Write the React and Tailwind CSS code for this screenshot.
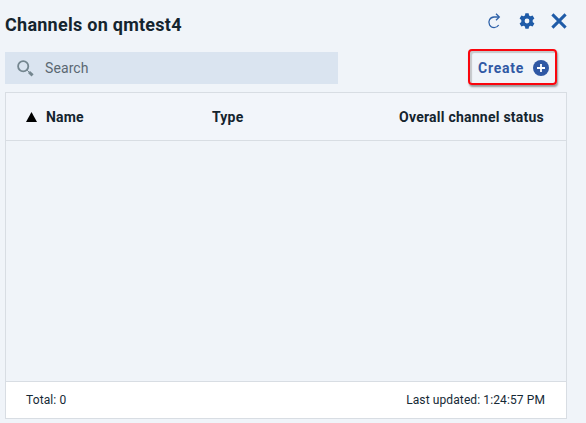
function RefreshIcon() {
  return (
    <svg className="block h-[18px] w-[14px]" viewBox="0 0 14 18" fill="none" stroke="#2d60a8" strokeWidth="1.3">
      <path d="M12 5H7a5.3 5.3 0 1 0 4.7 8" />
      <path d="M9 1.8L12.3 5 9 8.2" />
    </svg>
  );
}

function GearIcon() {
  return (
    <svg className="block h-4 w-4" viewBox="0 0 16 16" fill="#1f5ba8">
      <path
        fillRule="evenodd"
        d="M6.4.3h3.2l.5 2.2 1.3.8 2.2-.8 1.8 3-1.7 1.5v2l1.7 1.5-1.8 3-2.2-.8-1.3.8-.5 2.2H6.4l-.5-2.2-1.3-.8-2.2.8-1.8-3L2.3 9V7L.6 5.5l1.8-3 2.2.8 1.3-.8zM8 5.6a2.4 2.4 0 1 0 0 4.8 2.4 2.4 0 0 0 0-4.8z"
      />
    </svg>
  );
}

function CloseIcon() {
  return (
    <svg className="block h-4 w-4" viewBox="0 0 16 16" stroke="#1f5ba8" strokeWidth="3">
      <path d="M1.4 1.4l13.2 13.2M14.6 1.4L1.4 14.6" />
    </svg>
  );
}

function SearchIcon() {
  return (
    <svg className="block h-[17px] w-[17px]" viewBox="0 0 17 17" fill="none" stroke="#74868f">
      <circle cx="6.2" cy="6.2" r="5.1" strokeWidth="1.8" />
      <path d="M10.2 10.2l1.8 1.8" strokeWidth="1" />
      <path d="M12 12l3.6 3.4" strokeWidth="3" />
    </svg>
  );
}

function PlusIcon() {
  return (
    <svg className="block h-4 w-4" viewBox="0 0 16 16">
      <circle cx="8" cy="8" r="8" fill="#2f58a4" />
      <path d="M8 4v8M4 8h8" stroke="#fff" strokeWidth="1.8" />
    </svg>
  );
}

export default function App() {
  return (
    <main className="flex h-[423px] w-[586px] flex-col overflow-hidden bg-[#f0f4f9] pl-[5px] font-['Roboto','Liberation_Sans',sans-serif] text-[#152935]">
      <header className="flex h-[52px] shrink-0 items-start justify-between pr-[19px]">
        <h1 className="mt-[13px] text-[18px] leading-6 font-bold tracking-[0.26px] text-[#14242e]">Channels on qmtest4</h1>
        <div className="flex items-center pt-[12px]">
          <button aria-label="Refresh" className="mr-[18px]"><RefreshIcon /></button>
          <button aria-label="Settings" className="mr-4"><GearIcon /></button>
          <button aria-label="Close"><CloseIcon /></button>
        </div>
      </header>
      <div className="flex h-10 shrink-0 items-start justify-between pr-[29px]">
        <div className="flex h-8 w-[333px] items-center bg-[#dae4f0] pl-3">
          <SearchIcon />
          <span className="ml-[11px] text-[14px] leading-5 tracking-[0.1px] text-[#5a6872]">Search</span>
        </div>
        <button className="-mt-[3px] flex h-9 w-[89px] items-center rounded-[4px] border-2 border-[#fa050d] pt-[2px] pl-2 text-[14px] font-bold tracking-[0.75px] text-[#3058a4] shadow-[1px_2px_2px_#777b,inset_2px_2px_1px_#8886]">
          <span className="w-[55px] text-left">Create</span>
          <PlusIcon />
        </button>
      </div>
      <section className="flex h-[327px] w-[562px] shrink-0 flex-col border border-[#d8dde3] bg-[#f2f5fa]">
        <div className="flex h-12 shrink-0 items-center border-b border-[#d8dde3] pt-[2px] pl-5 text-[14px] font-bold text-[#14242e]">
          <svg className="mb-[2px] block h-[10px] w-[11px]" viewBox="0 0 11 10"><path d="M5.5 0L11 10H0z" fill="#000" /></svg>
          <span className="ml-[9px] w-[166px] tracking-[0.2px]">Name</span>
          <span className="w-[187px] tracking-[0.2px]">Type</span>
          <span className="tracking-[0.24px] whitespace-nowrap">Overall channel status</span>
        </div>
        <div className="grow bg-[#f0f4f9]" />
        <footer className="flex h-[37px] shrink-0 items-center justify-between border-t border-[#d8dde3] bg-white pr-[21px] pl-5 text-[12px] leading-4 tracking-[0.11px]">
          <span>Total: 0</span>
          <span>Last updated: 1:24:57 PM</span>
        </footer>
      </section>
    </main>
  );
}
